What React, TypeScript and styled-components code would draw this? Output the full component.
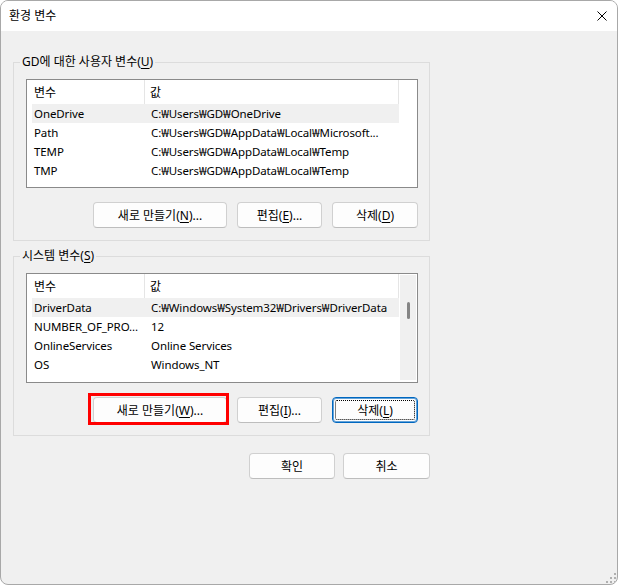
import React from 'react'
import styled, { createGlobalStyle } from 'styled-components'

type Variable = {
    name: string
    value: string
}

const userVars: Variable[] = [
    { name: 'OneDrive', value: 'C:₩Users₩GD₩OneDrive' },
    { name: 'Path', value: 'C:₩Users₩GD₩AppData₩Local₩Microsoft...' },
    { name: 'TEMP', value: 'C:₩Users₩GD₩AppData₩Local₩Temp' },
    { name: 'TMP', value: 'C:₩Users₩GD₩AppData₩Local₩Temp' },
]

const systemVars: Variable[] = [
    { name: 'DriverData', value: 'C:₩Windows₩System32₩Drivers₩DriverData' },
    { name: 'NUMBER_OF_PRO...', value: '12' },
    { name: 'OnlineServices', value: 'Online Services' },
    { name: 'OS', value: 'Windows_NT' },
    { name: 'Path', value: 'C:₩WINDOWS₩system32;C:₩WINDOWS;C:₩WINDOWS₩System32₩Wbem' },
]

const GlobalStyle = createGlobalStyle`
    html, body {
        margin: 0;
        background: #ffffff;
    }

    body {
        font-family: "Noto Sans", "Noto Sans CJK KR", sans-serif;
        font-size: 12px;
        color: #000;
    }
`

const Window = styled.div`
    position: relative;
    box-sizing: border-box;
    width: 618px;
    height: 585px;
    border: 1px solid #a8a8a8;
    border-radius: 8px;
    background: #f0f0f0;
    overflow: hidden;
    display: flex;
    flex-direction: column;
`

const TitleBar = styled.div`
    height: 30px;
    flex-shrink: 0;
    background: #ffffff;
    display: flex;
    align-items: center;
    justify-content: space-between;
    padding: 0 10px 0 8px;
`

const Title = styled.div`
    font-size: 12px;
    line-height: 16px;
`

const Body = styled.div`
    padding: 31px 12px 0 12px;
    display: flex;
    flex-direction: column;
`

const Group = styled.div<{ $gapTop?: number }>`
    position: relative;
    box-sizing: border-box;
    width: 417px;
    margin-top: ${p => p.$gapTop ?? 0}px;
    border: 1px solid #dcdcdc;
    padding: 16px 11px 12px 12px;
`

const GroupLabel = styled.div`
    position: absolute;
    top: -9px;
    left: 6px;
    padding: 0 2px;
    background: #f0f0f0;
    line-height: 16px;
`

const Mn = styled.span`
    text-decoration: underline;
    text-underline-offset: 2px;
`

const VarList = styled.div<{ $height: number }>`
    box-sizing: border-box;
    height: ${p => p.$height}px;
    border: 1px solid #8a8a8a;
    background: #ffffff;
    display: flex;
    overflow: hidden;
    font-size: 11.5px;
    letter-spacing: -0.1px;
`

const ListContent = styled.div`
    width: 367px;
    margin: 0 0 2px 5px;
    flex-shrink: 0;
    overflow: hidden;
`

const HeaderRow = styled.div`
    display: flex;
    height: 24px;
    border-right: 1px solid #e5e5e5;
`

const HeaderCell = styled.div<{ $first?: boolean }>`
    box-sizing: border-box;
    display: flex;
    align-items: center;
    flex: ${p => (p.$first ? '0 0 113px' : '1')};
    padding-left: ${p => (p.$first ? '2px' : '5px')};
    border-right: ${p => (p.$first ? '1px solid #e5e5e5' : 'none')};
    font-size: 12px;
    letter-spacing: 0;
`

const Row = styled.div<{ $selected?: boolean }>`
    display: flex;
    height: 19px;
    align-items: center;
    background: ${p => (p.$selected ? '#f0f0f0' : 'transparent')};
`

const Cell = styled.div<{ $first?: boolean }>`
    box-sizing: border-box;
    flex: ${p => (p.$first ? '0 0 113px' : '1')};
    min-width: 0;
    padding-left: ${p => (p.$first ? '2px' : '6px')};
    white-space: nowrap;
    overflow: hidden;
`

const ScrollColumn = styled.div`
    flex: 1;
    display: flex;
`

const ScrollTrack = styled.div`
    flex: 1;
    margin: 1px 1px 2px 1px;
    background: #f0f0f0;
`

const ScrollThumb = styled.div`
    width: 3px;
    height: 17px;
    margin: 27px 0 0 7px;
    border-radius: 2px;
    background: #858585;
`

const ButtonRow = styled.div<{ $gap: number; $top: number }>`
    display: flex;
    justify-content: flex-end;
    gap: ${p => p.$gap}px;
    margin-top: ${p => p.$top}px;
`

const Button = styled.button<{ $width: number; $focused?: boolean; $marked?: boolean }>`
    position: relative;
    box-sizing: border-box;
    width: ${p => p.$width}px;
    height: 26px;
    padding: 0;
    font-family: inherit;
    font-size: 12px;
    color: #000;
    background: #fdfdfd;
    border: 1px solid ${p => (p.$focused ? '#0067c0' : '#d0d0d0')};
    border-bottom-color: ${p => (p.$focused ? '#0067c0' : '#bdbdbd')};
    border-radius: 4px;
    box-shadow: ${p => (p.$focused ? 'inset 0 0 0 1px rgba(0, 103, 192, 0.6)' : 'none')};

    /* dotted focus rectangle */
    &::after {
        content: '';
        display: ${p => (p.$focused ? 'block' : 'none')};
        position: absolute;
        inset: 2px;
        border: 1px dotted #000;
        border-radius: 2px;
    }

    /* red annotation drawn over the screenshot */
    &::before {
        content: '';
        display: ${p => (p.$marked ? 'block' : 'none')};
        position: absolute;
        top: -5px;
        left: -6px;
        right: -3px;
        bottom: -3px;
        border: 3px solid #ff0000;
    }
`

const Footer = styled.div`
    width: 417px;
    display: flex;
    justify-content: flex-end;
    gap: 8px;
    margin-top: 17px;
`

const Grip = styled.svg`
    position: absolute;
    right: 1px;
    bottom: 1px;
`

const CloseIcon = () => (
    <svg width="10" height="10" viewBox="0 0 10 10">
        <path d="M0.5 0.5 L9.5 9.5 M9.5 0.5 L0.5 9.5" stroke="#000" strokeWidth="1" fill="none" />
    </svg>
)

type ListProps = {
    items: Variable[]
    height: number
    scrollbar?: boolean
}

const VariableList = ({ items, height, scrollbar }: ListProps) => (
    <VarList $height={height}>
        <ListContent>
            <HeaderRow>
                <HeaderCell $first>변수</HeaderCell>
                <HeaderCell>값</HeaderCell>
            </HeaderRow>
            {items.map((item, i) => (
                <Row key={item.name + i} $selected={i === 0}>
                    <Cell $first>{item.name}</Cell>
                    <Cell>{item.value}</Cell>
                </Row>
            ))}
        </ListContent>
        <ScrollColumn>
            {scrollbar && (
                <ScrollTrack>
                    <ScrollThumb />
                </ScrollTrack>
            )}
        </ScrollColumn>
    </VarList>
)

export default function App() {
    return (
        <>
            <GlobalStyle />
            <Window>
                <TitleBar>
                    <Title>환경 변수</Title>
                    <CloseIcon />
                </TitleBar>

                <Body>
                    <Group>
                        <GroupLabel>
                            GD에 대한 사용자 변수(<Mn>U</Mn>)
                        </GroupLabel>
                        <VariableList items={userVars} height={109} />
                        <ButtonRow $gap={10} $top={14}>
                            <Button $width={134}>
                                새로 만들기(<Mn>N</Mn>)...
                            </Button>
                            <Button $width={85}>
                                편집(<Mn>E</Mn>)...
                            </Button>
                            <Button $width={86}>
                                삭제(<Mn>D</Mn>)
                            </Button>
                        </ButtonRow>
                    </Group>

                    <Group $gapTop={15}>
                        <GroupLabel>
                            시스템 변수(<Mn>S</Mn>)
                        </GroupLabel>
                        <VariableList items={systemVars} height={110} scrollbar />
                        <ButtonRow $gap={10} $top={14}>
                            <Button $width={134} $marked>
                                새로 만들기(<Mn>W</Mn>)...
                            </Button>
                            <Button $width={85}>
                                편집(<Mn>I</Mn>)...
                            </Button>
                            <Button $width={86} $focused>
                                삭제(<Mn>L</Mn>)
                            </Button>
                        </ButtonRow>
                    </Group>

                    <Footer>
                        <Button $width={86}>확인</Button>
                        <Button $width={87}>취소</Button>
                    </Footer>
                </Body>

                <Grip width="10" height="10" viewBox="0 0 10 10">
                    <rect x="8" y="0" width="2" height="2" fill="#b0b0b0" />
                    <rect x="4" y="4" width="2" height="2" fill="#b0b0b0" />
                    <rect x="8" y="4" width="2" height="2" fill="#b0b0b0" />
                    <rect x="0" y="8" width="2" height="2" fill="#b0b0b0" />
                    <rect x="4" y="8" width="2" height="2" fill="#b0b0b0" />
                    <rect x="8" y="8" width="2" height="2" fill="#b0b0b0" />
                </Grip>
            </Window>
        </>
    )
}
